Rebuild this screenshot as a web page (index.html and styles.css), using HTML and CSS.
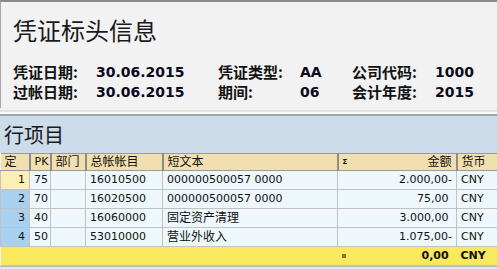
FILE: index.html
```html
<!DOCTYPE html>
<html lang="zh-CN">
<head>
    <meta charset="UTF-8">
    <title>凭证标头信息</title>
    <link rel="stylesheet" href="styles.css">
</head>
<body>
    <!-- Document header -->
    <div class="doc-header">
        <div class="doc-title">凭证标头信息</div>
        <div class="doc-fields">
            <span class="lbl">凭证日期:</span><span class="val">30.06.2015</span>
            <span class="lbl">凭证类型:</span><span class="val">AA</span>
            <span class="lbl">公司代码:</span><span class="val">1000</span>
            <span class="lbl">过帐日期:</span><span class="val">30.06.2015</span>
            <span class="lbl">期间:</span><span class="val">06</span>
            <span class="lbl">会计年度:</span><span class="val">2015</span>
        </div>
    </div>

    <div class="divider"></div>

    <!-- Line items -->
    <div class="items-title">行项目</div>
    <table class="items">
        <colgroup>
            <col style="width: 29px">
            <col style="width: 21px">
            <col style="width: 35px">
            <col style="width: 77px">
            <col style="width: 175px">
            <col style="width: 119px">
            <col style="width: 41px">
        </colgroup>
        <thead>
            <tr>
                <th class="zh">定</th>
                <th>PK</th>
                <th class="zh">部门</th>
                <th class="zh">总帐帐目</th>
                <th class="zh">短文本</th>
                <th class="zh num"><span class="sigma">&Sigma;</span>金额</th>
                <th class="zh">货币</th>
            </tr>
        </thead>
        <tbody>
            <tr>
                <td class="pos sel">1</td>
                <td>75</td>
                <td></td>
                <td>16010500</td>
                <td>000000500057 0000</td>
                <td class="num">2.000,00-</td>
                <td>CNY</td>
            </tr>
            <tr>
                <td class="pos">2</td>
                <td>70</td>
                <td></td>
                <td>16020500</td>
                <td>000000500057 0000</td>
                <td class="num">75,00&nbsp;</td>
                <td>CNY</td>
            </tr>
            <tr>
                <td class="pos">3</td>
                <td>40</td>
                <td></td>
                <td>16060000</td>
                <td class="zh">固定资产清理</td>
                <td class="num">3.000,00&nbsp;</td>
                <td>CNY</td>
            </tr>
            <tr>
                <td class="pos">4</td>
                <td>50</td>
                <td></td>
                <td>53010000</td>
                <td class="zh">营业外收入</td>
                <td class="num">1.075,00-</td>
                <td>CNY</td>
            </tr>
            <tr class="total">
                <td></td>
                <td></td>
                <td></td>
                <td></td>
                <td></td>
                <td class="num"><span class="mark"></span>0,00&nbsp;</td>
                <td>CNY</td>
            </tr>
        </tbody>
    </table>
    <div class="footer-strip"></div>
</body>
</html>
```

FILE: styles.css
```css
/* General styles */
body {
    margin: 0;
    padding: 0;
    width: 497px;
    height: 269px;
    overflow: hidden;
    background: #f2f2f2;
    font-family: "DejaVu Sans", "Noto Sans CJK SC", sans-serif;
    color: #111;
}

/* Document header */
.doc-header {
    height: 108px;
    border-top: 2px solid #8a8a8a;
    border-left: 1px solid #a8a8a8;
    background: #f2f2f2;
    padding: 13px 0 0 12px;
    box-sizing: border-box;
}

.doc-title {
    font-family: "Noto Sans CJK SC", sans-serif;
    font-size: 24px;
    line-height: 30px;
    color: #1a1a1a;
}

.doc-fields {
    display: grid;
    grid-template-columns: 83px 122px 82px 52px 83px auto;
    grid-auto-rows: 20px;
    margin-top: 17px;
    line-height: 20px;
}

.doc-fields .lbl {
    font-family: "Noto Sans CJK SC", sans-serif;
    font-weight: bold;
    font-size: 15px;
}

.doc-fields .val {
    font-weight: bold;
    font-size: 14px;
    color: #0a0a20;
}

/* Separator between panels */
.divider {
    height: 8px;
    background: linear-gradient(#f2f2f2 0, #f2f2f2 2px, #e2e2e2 2px, #e2e2e2 4px, #fafafa 4px, #fafafa 6px, #9ca4ac 6px);
}

/* Line items */
.items-title {
    height: 37px;
    line-height: 37px;
    padding-left: 4px;
    background: #cddcea;
    font-family: "Noto Sans CJK SC", sans-serif;
    font-size: 20px;
    color: #1a1a1a;
}

.items {
    width: 497px;
    table-layout: fixed;
    border-collapse: collapse;
    font-size: 11px;
}

.items th {
    height: 16px;
    padding: 0 4px;
    background: #f2dfb0;
    border-top: 1px solid #9a9a9a;
    border-bottom: 1px solid #9a9a9a;
    border-right: 2px solid #8c8c8c;
    font-weight: normal;
    text-align: left;
    white-space: nowrap;
    overflow: hidden;
    line-height: 16px;
}

.items th:last-child {
    border-right: 1px solid #9a9a9a;
}

.items td {
    height: 18px;
    padding: 0 4px;
    background: #eef8fc;
    border: 1px solid #c2c2c2;
    white-space: nowrap;
    overflow: hidden;
    line-height: 18px;
}

.items .zh {
    font-size: 12px;
}

.items .num {
    text-align: right;
}

.items th.num {
    position: relative;
}

.sigma {
    position: absolute;
    left: 4px;
    top: 0;
    font-size: 7px;
    font-weight: bold;
}

.items td.pos {
    text-align: right;
    background: #a9d1ef;
}

.items td.pos.sel {
    background: #fcefb3;
}

.items tr.total td {
    background: #f8e95e;
    border-left: none;
    border-right: none;
    font-weight: bold;
}

.items td.num .mark {
    float: left;
    width: 4px;
    height: 4px;
    margin-top: 7px;
    background: #857a1c;
}

.footer-strip {
    height: 3px;
    border-top: 1px solid #b8b8b8;
    background: #e8e8e8;
}
```
